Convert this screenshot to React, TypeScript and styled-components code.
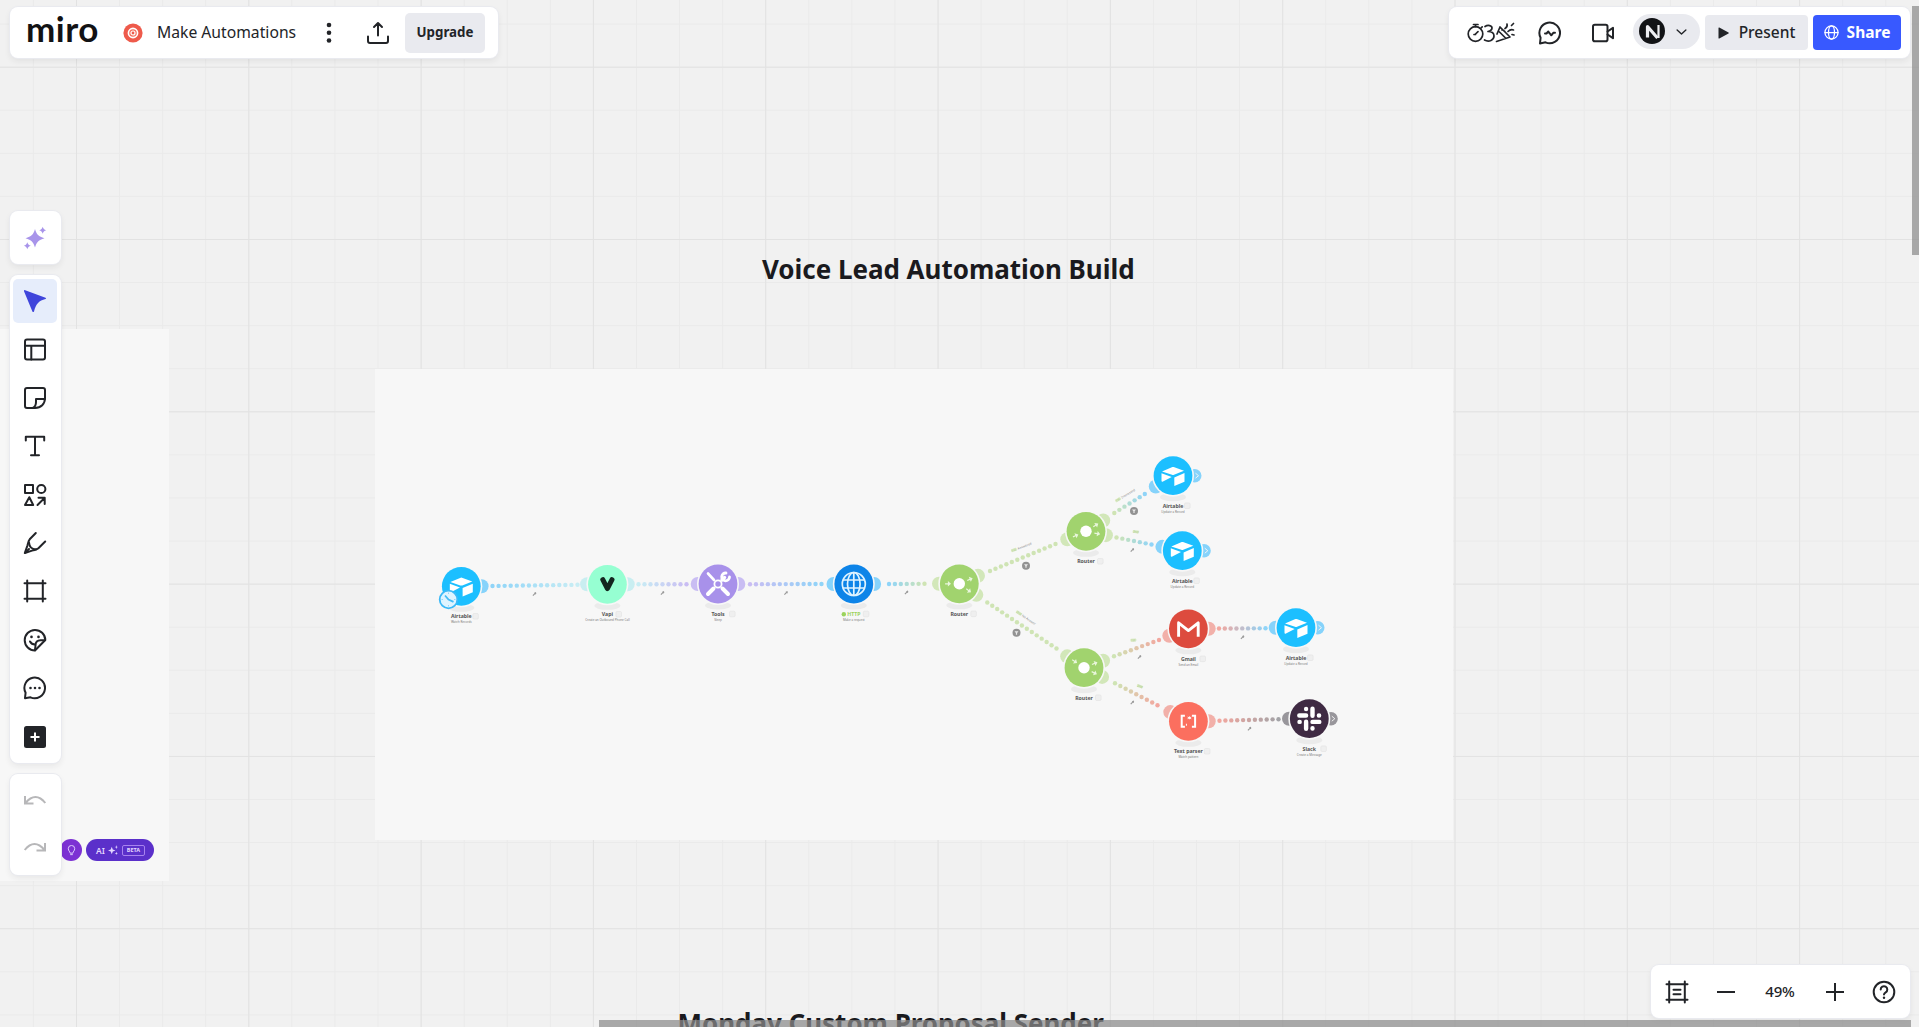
import React from 'react';
import styled, { createGlobalStyle } from 'styled-components';

const colors = {
  ink: '#222428',
  canvas: '#f1f1f1',
  frame: '#f7f7f7',
  muted: '#e9eaef',
  primary: '#3859ff',
  airtable: '#1cbfff',
  vapi: '#96ffd2',
  tools: '#a891ea',
  http: '#0d84e8',
  router: '#a1d36e',
  gmail: '#dd4b3e',
  parser: '#fb6f5f',
  slack: '#3f2a43',
};

const GlobalStyle = createGlobalStyle`
  * { box-sizing: border-box; }
  html, body, #root { height: 100%; margin: 0; }
  body {
    overflow: hidden;
    background: ${colors.canvas};
    color: ${colors.ink};
    font-family: 'Noto Sans', 'Open Sans', sans-serif;
  }
  button { font-family: inherit; color: inherit; border: 0; padding: 0; background: none; }
  svg { display: block; flex: none; }
`;

/* ---------- canvas ---------- */

const Board = styled.div`
  position: absolute;
  inset: 0;
  overflow: hidden;
  background-color: ${colors.canvas};
  background-image:
    linear-gradient(to right, #e2e2e2 1px, transparent 1px),
    linear-gradient(to bottom, #e2e2e2 1px, transparent 1px),
    linear-gradient(to right, #eaeaea 1px, transparent 1px),
    linear-gradient(to bottom, #eaeaea 1px, transparent 1px);
  background-size: 172.32px 172.32px, 172.32px 172.32px, 43.08px 43.08px, 43.08px 43.08px;
  background-position: 76px 66.7px, 76px 66.7px, 32.9px 23.6px, 32.9px 23.6px;
`;

const BoardTitle = styled.h2<{ $x: number; $y: number }>`
  position: absolute;
  left: ${(p) => p.$x}px;
  top: ${(p) => p.$y}px;
  margin: 0;
  font-size: 26px;
  line-height: 36px;
  font-weight: 700;
  letter-spacing: -0.03px;
  white-space: nowrap;
  color: #1a1a1e;
`;

const BoardImage = styled.div<{ $x: number; $y: number; $w: number; $h: number }>`
  position: absolute;
  left: ${(p) => p.$x}px;
  top: ${(p) => p.$y}px;
  width: ${(p) => p.$w}px;
  height: ${(p) => p.$h}px;
  background: ${colors.frame};
`;

const AiChips = styled.div`
  display: flex;
  align-items: center;
  justify-content: flex-end;
  gap: 4px;
  height: 22px;
  margin: 510px 15px 0 0;
  color: #e4d8ff;
`;

const BulbChip = styled.div`
  display: grid;
  place-items: center;
  width: 22px;
  height: 22px;
  border-radius: 50%;
  background: #7c31d3;
`;

const AiChip = styled.div`
  display: flex;
  align-items: center;
  gap: 3px;
  width: 68px;
  height: 22px;
  padding: 0 9px 0 10px;
  border-radius: 11px;
  background: #5b30ca;
  font-size: 8.5px;
  font-weight: 600;
`;

const BetaTag = styled.span`
  display: grid;
  place-items: center;
  width: 24px;
  height: 11px;
  margin-left: 1px;
  border: 1px solid #a883ee;
  border-radius: 2px;
  font-size: 5.5px;
  font-weight: 700;
`;

const Diagram = styled.svg`
  position: absolute;
  inset: 0;
`;

const NodeName = styled.text`
  font-size: 5.2px;
  font-weight: 700;
  fill: #555;
  text-anchor: middle;
`;

const NodeAction = styled.text`
  font-size: 3px;
  fill: #777;
  text-anchor: middle;
`;

const EdgeLabel = styled.text`
  font-size: 3.2px;
  fill: #888;
`;

type Kind = 'airtable' | 'vapi' | 'tools' | 'http' | 'router' | 'gmail' | 'parser' | 'slack';

interface FlowNode {
  x: number;
  y: number;
  kind: Kind;
  name: string;
  action?: string;
  ports: number[];
  out?: boolean;
  arrows?: number[];
}

const nodes: FlowNode[] = [
  { x: 461.3, y: 586.3, kind: 'airtable', name: 'Airtable', action: 'Watch Records', ports: [0] },
  { x: 607.4, y: 584.3, kind: 'vapi', name: 'Vapi', action: 'Create an Outbound Phone Call', ports: [180, 0] },
  { x: 718, y: 584, kind: 'tools', name: 'Tools', action: 'Sleep', ports: [180, 0] },
  { x: 853.8, y: 584, kind: 'http', name: 'HTTP', action: 'Make a request', ports: [180, 0] },
  { x: 959.3, y: 583.8, kind: 'router', name: 'Router', ports: [180, -23, 33], arrows: [180, -23, 36] },
  { x: 1086, y: 531.3, kind: 'router', name: 'Router', ports: [157, -32, 11], arrows: [157, -32, 12] },
  { x: 1173, y: 475.7, kind: 'airtable', name: 'Airtable', action: 'Update a Record', ports: [148], out: true },
  { x: 1182.3, y: 550.7, kind: 'airtable', name: 'Airtable', action: 'Update a Record', ports: [191], out: true },
  { x: 1084, y: 667.7, kind: 'router', name: 'Router', ports: [214, -20, 27], arrows: [214, -22, 27] },
  { x: 1188.4, y: 628.8, kind: 'gmail', name: 'Gmail', action: 'Send an Email', ports: [160, 0] },
  { x: 1296, y: 627.7, kind: 'airtable', name: 'Airtable', action: 'Update a Record', ports: [180], out: true },
  { x: 1188.4, y: 721.3, kind: 'parser', name: 'Text parser', action: 'Match pattern', ports: [207, 0] },
  { x: 1309.3, y: 718.7, kind: 'slack', name: 'Slack', action: 'Create a Message', ports: [180], out: true },
];

interface FlowEdge {
  from: [number, number];
  to: [number, number];
  count: number;
  colors: [string, string];
  tool?: [number, number];
  filter?: [number, number];
  label?: { x: number; y: number; angle: number; text: string; tag: string };
}

const light = {
  airtable: '#8fd4f8',
  aqua: '#c8edf4',
  tools: '#c9bdf3',
  router: '#cfe4b4',
  red: '#f2a79f',
  gray: '#a3a3a7',
};

const edges: FlowEdge[] = [
  { from: [492.5, 586], to: [577.5, 584.8], count: 15, colors: [light.airtable, light.aqua], tool: [534.5, 594] },
  { from: [638.5, 584.3], to: [686.5, 584.2], count: 9, colors: [light.aqua, light.tools], tool: [662.5, 593] },
  { from: [750, 584.2], to: [821.5, 584], count: 13, colors: [light.tools, light.airtable], tool: [786, 593] },
  { from: [889, 584], to: [924.5, 583.8], count: 7, colors: [light.airtable, light.router], tool: [906.5, 592.5] },
  {
    from: [990, 571], to: [1055.5, 544], count: 13, colors: [light.router, light.router], filter: [1026, 565.8],
    label: { x: 1012, y: 552, angle: -21, text: 'Answered', tag: '1st' },
  },
  {
    from: [987.3, 602.5], to: [1056.5, 648.5], count: 15, colors: [light.router, light.router], filter: [1016.5, 632.8],
    label: { x: 1016, y: 612.5, angle: 34, text: 'No Answer', tag: '2nd' },
  },
  {
    from: [1114.3, 513], to: [1144.8, 494], count: 7, colors: [light.router, light.airtable], filter: [1134, 511],
    label: { x: 1116.5, y: 502, angle: -31, text: 'Interested', tag: '1st' },
  },
  {
    from: [1116.5, 537.5], to: [1151.5, 544.5], count: 7, colors: [light.router, light.airtable], tool: [1132.3, 550],
    label: { x: 1133, y: 532.5, angle: 8, text: '', tag: '2nd' },
  },
  {
    from: [1114, 656.3], to: [1159, 640], count: 9, colors: [light.router, light.red], tool: [1139.5, 657],
    label: { x: 1131, y: 641.5, angle: -5, text: '', tag: '1st' },
  },
  {
    from: [1115, 683.3], to: [1157.5, 705.2], count: 9, colors: [light.router, light.red], tool: [1132.3, 702.5],
    label: { x: 1137, y: 686.5, angle: 20, text: '', tag: '2nd' },
  },
  { from: [1219, 628.5], to: [1265.5, 628.3], count: 9, colors: [light.red, light.airtable], tool: [1242.5, 637.3] },
  { from: [1219.5, 720.7], to: [1278.5, 719.2], count: 11, colors: [light.red, light.gray], tool: [1249.5, 728.7] },
];

const portColor: Record<Kind, string> = {
  airtable: '#86d3fb',
  vapi: '#c9eef1',
  tools: '#c9bdf3',
  http: '#86d3fb',
  router: '#d2e7b9',
  gmail: '#f2b0a9',
  parser: '#f2b0a9',
  slack: '#98969b',
};

const rad = (deg: number) => (deg * Math.PI) / 180;

const mix = (a: string, b: string, t: number) => {
  const channel = (hex: string, i: number) => parseInt(hex.slice(i, i + 2), 16);
  return `rgb(${[1, 3, 5].map((i) => Math.round(channel(a, i) * (1 - t) + channel(b, i) * t)).join(',')})`;
};

const Edge: React.FC<{ edge: FlowEdge }> = ({ edge }) => {
  const { from, to, count, label } = edge;
  return (
    <g>
      {Array.from({ length: count }, (_, i) => {
        const t = i / (count - 1);
        return (
          <circle
            key={i}
            cx={from[0] + (to[0] - from[0]) * t}
            cy={from[1] + (to[1] - from[1]) * t}
            r={2.2}
            fill={mix(edge.colors[0], edge.colors[1], t)}
          />
        );
      })}
      {edge.tool && (
        <path
          d={`M${edge.tool[0] - 1.6} ${edge.tool[1] + 1.6}l2.2-2.2m-.8-.2 1.8-.6m-.8 1.7 .5-1.3`}
          stroke="#9a9a9a"
          strokeWidth={1.2}
          fill="none"
        />
      )}
      {edge.filter && (
        <g transform={`translate(${edge.filter[0]} ${edge.filter[1]})`}>
          <circle r={4} fill="#929292" />
          <path d="M-2-1.5h4L.6.3v1.6h-1.2V.3z" fill="#e9e9e9" />
        </g>
      )}
      {label && (
        <g transform={`translate(${label.x} ${label.y}) rotate(${label.angle})`}>
          <rect x={-0.5} y={-2.7} width={6} height={3} rx={1} fill="#d9eac4" />
          <EdgeLabel style={{ fill: '#a9c884' }}>{label.tag}</EdgeLabel>
          {label.text && <EdgeLabel x={6.5}>{label.text}</EdgeLabel>}
        </g>
      )}
    </g>
  );
};

const Glyph: React.FC<{ kind: Kind; arrows?: number[] }> = ({ kind, arrows = [] }) => {
  switch (kind) {
    case 'airtable':
      return (
        <g fill="#fff">
          <path d="M-11-4.3-.6-8.6Q0-8.9.7-8.6L11-4.9 1-.9Q0-.5-1-.9z" />
          <path d="M-11.5-2.5-1.3 1.2-10 5.8Q-11.5 6.4-11.5 5z" />
          <path d="M1.3 1.8 11.5-2.6V6L1.3 10.2z" />
        </g>
      );
    case 'vapi':
      return <path d="M-4.6-4.6 0 4.3 4.6-4.6" fill="none" stroke="#14251f" strokeWidth={5} strokeLinecap="round" strokeLinejoin="round" />;
    case 'tools':
      return (
        <g stroke="#fff" fill="none" strokeLinecap="round">
          <path d="M-10-10.5-4-4" strokeWidth={2.6} />
          <path d="M4.5 4.5 10 10M-4.5 4.5-10 10" strokeWidth={4} />
          <path d="M4-4 6.5-6.5" strokeWidth={3.4} />
          <path d="M8-11A3.9 3.9 0 1 0 11.5-7" strokeWidth={2.8} />
          <circle r={3.6} strokeWidth={1.8} />
        </g>
      );
    case 'http':
      return (
        <g stroke="#dff3ff" fill="none" strokeWidth={1.7}>
          <circle r={11.5} />
          <ellipse rx={6.3} ry={11.5} />
          <path d="M0-11.5v23M-11-4H11M-11 4H11" />
        </g>
      );
    case 'router':
      return (
        <g>
          <circle r={5.7} fill="#fff" />
          {arrows.map((a, i) => {
            const inward = i === 0;
            return (
              <path
                key={a}
                transform={`translate(${11.4 * Math.cos(rad(a))} ${11.4 * Math.sin(rad(a))}) rotate(${inward ? a + 180 : a})`}
                d="M-2.8-.6H0V-2.7L3.1 0 0 2.7V.6h-2.8z"
                fill="#e9f6dc"
              />
            );
          })}
        </g>
      );
    case 'gmail':
      return <path d="M-9.8 8V-6L0 1.8 9.8-6V8" fill="none" stroke="#fff" strokeWidth={2.9} strokeLinejoin="round" />;
    case 'parser':
      return (
        <g stroke="#fff" fill="none" strokeWidth={2}>
          <path d="M-3.5-5.5H-6.7V5.5H-3.5M3.5-5.5H6.7V5.5H3.5" />
          <path d="M1-5v3M-.8-4.2l3.6 1.6M-.8-2.6l3.6-1.6" strokeWidth={0.9} />
          <path d="M-2.5 3.5h1" />
        </g>
      );
    case 'slack':
      return (
        <g stroke="#fff" strokeWidth={4.4} strokeLinecap="round">
          <path d="M3.2-10V-3M-3.2 3V10M-10-3.2H-3.2M3.2 3.2H10M-3.2-9.8v.2M3.2 9.8v-.2M9.8-3.2h-.2M-9.8 3.2h.2" />
        </g>
      );
    default:
      return null;
  }
};

const Module: React.FC<{ node: FlowNode }> = ({ node }) => {
  const { kind, ports, out } = node;
  const isHttp = kind === 'http';
  const badgeX = node.name.length > 9 ? 16 : isHttp ? 9.5 : node.name === 'Vapi' ? 8.5 : 11.5;
  return (
    <g transform={`translate(${node.x} ${node.y})`}>
      <ellipse cy={21.5} rx={13} ry={4} fill="#ebebeb" />
      {ports.map((a) => (
        <circle key={a} cx={20.3 * Math.cos(rad(a))} cy={20.3 * Math.sin(rad(a))} r={7} fill={portColor[kind]} />
      ))}
      {out && (
        <g>
          <circle cx={21.7} r={6.8} fill={portColor[kind]} />
          <path d="M22.5-2.5 25.5 0l-3 2.5" stroke="#f7f7f7" strokeWidth={0.9} fill="none" />
        </g>
      )}
      <circle r={21} fill={colors.frame} />
      <circle r={19.4} fill={colors[kind]} />
      <Glyph kind={kind} arrows={node.arrows} />
      {isHttp && <circle cx={-10} cy={30.2} r={2.2} fill="#9bd35c" />}
      <NodeName x={isHttp ? 0 : 0} y={32} style={isHttp ? { fill: '#9bd35c' } : undefined}>
        {node.name}
      </NodeName>
      <rect x={badgeX} y={27.2} width={5.6} height={5.6} rx={1.2} fill="#efefef" stroke="#dedede" strokeWidth={0.5} />
      {node.action && <NodeAction y={37}>{node.action}</NodeAction>}
    </g>
  );
};

const Workflow: React.FC = () => (
  <Diagram width={1919} height={1027} viewBox="0 0 1919 1027">
    {edges.map((edge, i) => (
      <Edge key={i} edge={edge} />
    ))}
    {nodes.map((node, i) => (
      <Module key={i} node={node} />
    ))}
    <g transform="translate(448.5 599.5)">
      <circle r={8.8} fill="#dff4ff" stroke="#3cb9f7" strokeWidth={1.8} />
      <path d="M-3.5-4 0 0 5 2.4" stroke="#45bcf6" strokeWidth={1.8} fill="none" />
      <path d="M0-7v1.5M0 5.5V7M-7 0h1.5M5.5 0H7" stroke="#8cd3f8" strokeWidth={0.9} />
    </g>
  </Diagram>
);

/* ---------- interface ---------- */

const Interface = styled.div`
  position: relative;
  display: flex;
  flex-direction: column;
  height: 100vh;
  padding: 7px 9px 9px 10px;
`;

const Panel = styled.div`
  display: flex;
  align-items: center;
  background: #fff;
  border-radius: 8px;
  box-shadow: 0 0 0 1px #e9eaef, 0 3px 6px rgba(34, 36, 40, 0.08);
`;

const TopRow = styled.header`
  display: flex;
  justify-content: space-between;
  height: 51px;
`;

const BoardPanel = styled(Panel)`
  width: 488px;
  padding: 0 13px 0 16px;
`;

const Logo = styled.div`
  width: 97px;
  font-family: Lato, 'Noto Sans', sans-serif;
  font-size: 35px;
  line-height: 40px;
  font-weight: 700;
  letter-spacing: 0.5px;
  color: #121214;
  margin-top: -9px;
`;

const BoardName = styled.div`
  width: 162px;
  margin: -2px 0 0 14px;
  font-size: 15.7px;
  white-space: nowrap;
`;

const UpgradeButton = styled.button`
  width: 80px;
  height: 40px;
  margin-left: auto;
  padding-bottom: 2px;
  border-radius: 5px;
  background: ${colors.muted};
  font-size: 13.3px;
  font-weight: 700;
`;

const SharePanel = styled(Panel)`
  width: 461px;
  padding: 0 9px 0 18px;
`;

const AccountButton = styled.button`
  display: flex;
  align-items: center;
  gap: 9px;
  width: 67px;
  height: 35px;
  margin: -3px 5px 0 18px;
  padding-left: 6px;
  border-radius: 18px;
  background: ${colors.muted};
`;

const ActionButton = styled.button<{ $primary?: boolean }>`
  display: flex;
  align-items: center;
  justify-content: center;
  gap: ${(p) => (p.$primary ? 8 : 10)}px;
  width: ${(p) => (p.$primary ? 88 : 103)}px;
  height: 35px;
  margin-right: ${(p) => (p.$primary ? 0 : 5)}px;
  border-radius: 4px;
  background: ${(p) => (p.$primary ? colors.primary : colors.muted)};
  color: ${(p) => (p.$primary ? '#fff' : colors.ink)};
  font-size: 15.5px;
  font-weight: ${(p) => (p.$primary ? 700 : 500)};
`;

const ActionLabel = styled.span`
  padding-bottom: 2px;
`;

const SideColumn = styled.nav`
  display: flex;
  flex-direction: column;
  gap: 11px;
  width: 51px;
  margin-top: 153px;
`;

const SidePanel = styled(Panel)<{ $height: number; $top?: number }>`
  flex-direction: column;
  align-items: flex-start;
  height: ${(p) => p.$height}px;
  padding: ${(p) => p.$top || 0}px 0 0 3px;
`;

const ToolButton = styled.button<{ $active?: boolean }>`
  display: grid;
  place-items: center;
  width: 44px;
  height: 44px;
  margin-bottom: 4.5px;
  border-radius: 5px;
  background: ${(p) => (p.$active ? '#e6edfb' : 'transparent')};
`;

const ZoomPanel = styled(Panel)`
  width: 259px;
  height: 53px;
  margin: auto 0 0 auto;
  padding: 0 14px;
  justify-content: space-between;
`;

const ZoomValue = styled.span`
  width: 34px;
  margin: -2px 1px 0 0;
  text-align: center;
  font-size: 15px;
  font-weight: 500;
  letter-spacing: -0.2px;
`;

const ScrollTrack = styled.div<{ $vertical?: boolean }>`
  position: absolute;
  background: rgba(140, 140, 140, 0.72);
  ${(p) =>
    p.$vertical
      ? 'right: 0; top: 6px; width: 7px; height: 249px;'
      : 'bottom: 0; left: 599px; right: 8px; height: 7px;'}
`;

const IconSlot = styled.div<{ $gap: number }>`
  margin-left: ${(p) => p.$gap}px;
`;

const Icon: React.FC<{ size?: number; width?: number; stroke?: string; children: React.ReactNode }> = ({
  size = 24,
  width = 2,
  stroke = 'currentColor',
  children,
}) => (
  <svg width={size} height={size} viewBox="0 0 24 24" fill="none" stroke={stroke} strokeWidth={width} strokeLinejoin="round" strokeLinecap="round">
    {children}
  </svg>
);

const tools: React.ReactNode[] = [
  <Icon key="templates">
    <rect x={2} y={2.5} width={20} height={20} rx={2} />
    <path d="M2 8.8h20M8.3 8.8V22.5" />
  </Icon>,
  <Icon key="sticky">
    <path d="M4 2h16a2 2 0 0 1 2 2v8c0 6-4 10-10 10H4a2 2 0 0 1-2-2V4a2 2 0 0 1 2-2z" />
    <path d="M21.8 13H13v3c0 3-1 5-3.2 6" />
  </Icon>,
  <Icon key="text">
    <path d="M2.8 6.5V2.8h18.4v3.7M12 2.8v18.4M8 21.2h8" />
  </Icon>,
  <Icon key="shapes">
    <path d="M2 2h8v8H2zM6.3 14.2 10.2 22H2zM14.5 22l7-7M15.5 14.8h6.2v6.2" />
    <circle cx={18.3} cy={6} r={4.1} />
  </Icon>,
  <Icon key="pen">
    <path d="M12.8 2 6.7 8.3C5.2 10 5.2 12 4.5 14.3L1.8 22l8-2.6c2.2-.7 4-.7 5.6-2.2l6.8-6.7" />
    <path d="M6 11.5c.3 4.2 2.7 6.8 7 6.9M2.5 21.5 6 18" />
  </Icon>,
  <Icon key="frame">
    <path d="M4.2 1.5v21M19.8 1.5v21M1.5 4.2h21M1.5 19.8h21" />
  </Icon>,
  <Icon key="sticker">
    <path d="M12 22.5A10.3 10.3 0 1 1 22.3 12z" />
    <path d="M12 22.2c0-2 .5-3.2.5-5 0-3.2 1.8-5 5-5h4.5" />
    <path d="M7 13.5c1 2 2.7 3 5 3" />
    <path d="M8.5 8.8v.2M15.5 8.8v.2" strokeWidth={2.6} />
  </Icon>,
  <Icon key="comment">
    <path d="M2 22.2l.6-5.5A10.3 10.3 0 1 1 7.5 21.3z" />
    <path d="M7.5 12h.01M12 12h.01M16.5 12h.01" strokeWidth={2.6} />
  </Icon>,
  <Icon key="more">
    <rect x={1} y={1} width={22} height={22} rx={2.5} fill={colors.ink} stroke="none" />
    <path d="M12 7.5v9M7.5 12h9" stroke="#fff" strokeLinecap="butt" />
  </Icon>,
];

const App: React.FC = () => {
  return (
    <>
      <GlobalStyle />
      <Board>
        <BoardImage $x={0} $y={329} $w={169} $h={552}>
          <AiChips>
            <BulbChip>
              <Icon size={11}>
                <path d="M9 17c0-3-4-4-4-9a7 7 0 0 1 14 0c0 5-4 6-4 9zM10 21h4" />
              </Icon>
            </BulbChip>
            <AiChip>
              AI
              <svg width={10} height={10} viewBox="0 0 24 24" fill="currentColor">
                <path d="M9 4l2.5 6.5L18 13l-6.5 2.5L9 22l-2.5-6.5L0 13l6.5-2.5zM20 0l1 4 3 1-3 1-1 4-1-4-3-1 3-1zM20 16l1 3 3 1-3 1-1 3-1-3-3-1 3-1z" />
              </svg>
              <BetaTag>BETA</BetaTag>
            </AiChip>
          </AiChips>
        </BoardImage>
        <BoardImage $x={375} $y={369} $w={1078} $h={471} />
        <BoardTitle $x={762} $y={251}>Voice Lead Automation Build</BoardTitle>
        <BoardTitle $x={677.5} $y={1005}>Monday Custom Proposal Sender</BoardTitle>
        <Workflow />
      </Board>

      <Interface>
        <TopRow>
          <BoardPanel>
            <Logo>miro</Logo>
            <svg width={20} height={20} viewBox="0 0 20 20">
              <circle cx={10} cy={10} r={9.6} fill="#ee5a4b" />
              <circle cx={10} cy={10} r={4.6} fill="#f4705f" stroke="#fff" strokeWidth={1.6} />
              <circle cx={10} cy={10} r={2} fill="#ee5a4b" stroke="#fff" strokeWidth={1.2} />
            </svg>
            <BoardName>Make Automations</BoardName>
            <svg width={20} height={24} viewBox="0 0 20 24" fill={colors.ink}>
              <circle cx={10} cy={4} r={2.3} />
              <circle cx={10} cy={11.7} r={2.3} />
              <circle cx={10} cy={19.5} r={2.3} />
            </svg>
            <IconSlot $gap={27}>
              <Icon>
                <path d="M12 14.5V2.2M8 6l4-4 4 4M2 15.5V20a2 2 0 0 0 2 2h16a2 2 0 0 0 2-2v-4.5" />
              </Icon>
            </IconSlot>
            <UpgradeButton>Upgrade</UpgradeButton>
          </BoardPanel>

          <SharePanel>
            <svg width={49} height={24} viewBox="0 0 49 24" fill="none" stroke={colors.ink} strokeWidth={1.7} strokeLinecap="round" strokeLinejoin="round">
              <circle cx={8.5} cy={13} r={7.3} />
              <path d="M8.5 5.7V4M6.5 3.5h4.5M14 7l1.2-1.2M8 13.5l3-2.8M7 13.5h1.5" />
              <path d="M18 5.500c3-2 7-1 7 1.500 0 2-2 3-4 3.500 3 0 6 1.200 6 4.500 0 4-5 6.500-9.500 4" />
              <path d="M33 6 43 16 29.5 20.5M33 6l-3 7M32.5 11l6 6M35 9c1 0 2 .5 3 1.500M38 7.500c2-1 2.500-2.500 2-4.500M41 10.500c2-2 4-2 5.500-1.500M44.500 4.500l2-2M45 13.500l2 .5" />
            </svg>
            <IconSlot $gap={22}>
              <Icon>
                <path d="M2 22.5l.6-5.8A10.3 10.3 0 1 1 7.5 21.3z" />
                <path d="M7 12.5h1.5l1.8-2 3 3.8 2-2.5H17" />
              </Icon>
            </IconSlot>
            <IconSlot $gap={29}>
              <Icon>
                <rect x={2} y={3.8} width={14.5} height={16.4} rx={1.8} />
                <path d="M16.5 10.5 22 6.8v10.4l-5.5-3.7" />
              </Icon>
            </IconSlot>
            <AccountButton>
              <svg width={26} height={26} viewBox="0 0 26 26">
                <circle cx={13} cy={13} r={13} fill="#121316" />
                <path d="M8.5 19.5V8.5L18.5 20" stroke="#eeeef2" strokeWidth={3.2} fill="none" strokeLinejoin="round" />
                <path d="M19.5 20V7" stroke="#eeeef2" strokeWidth={2.2} />
              </svg>
              <Icon size={15} width={2.2}>
                <path d="m5 9.5 7 6.5 7-6.5" />
              </Icon>
            </AccountButton>
            <ActionButton>
              <svg width={11} height={12} viewBox="0 0 11 12">
                <path d="M.5 1Q.5.2 1.3.5L10.500 5.500q.6.500 0 1L1.300 11.500q-.8.300-.8-.5z" fill={colors.ink} />
              </svg>
              <ActionLabel>Present</ActionLabel>
            </ActionButton>
            <ActionButton $primary>
              <Icon size={15}>
                <circle cx={12} cy={12} r={10.5} />
                <ellipse cx={12} cy={12} rx={4.8} ry={10.5} />
                <path d="M1.5 12h21" />
              </Icon>
              <ActionLabel>Share</ActionLabel>
            </ActionButton>
          </SharePanel>
        </TopRow>

        <SideColumn>
          <SidePanel $height={53} $top={5}>
            <ToolButton>
              <svg width={24} height={24} viewBox="0 0 24 24" fill="#a894ea">
                <path d="M12 3c1.6 5.500 3.500 7.500 9.500 9.200-6 1.900-7.900 3.800-9.500 9.300-1.600-5.500-3.500-7.400-9.500-9.300C8.500 10.500 10.400 8.500 12 3z" />
                <path d="M19.700.8c.6 2.100 1.400 2.900 3.500 3.500-2.100.6-2.900 1.400-3.500 3.500-.6-2.100-1.400-2.900-3.500-3.500 2.100-.6 2.900-1.400 3.500-3.500zM4.300 16.200c.6 2.100 1.400 2.900 3.500 3.500-2.100.6-2.900 1.400-3.500 3.500-.6-2.100-1.400-2.900-3.500-3.500 2.100-.6 2.900-1.400 3.500-3.500z" />
              </svg>
            </ToolButton>
          </SidePanel>
          <SidePanel $height={488} $top={4}>
            <ToolButton $active>
              <svg width={24} height={24} viewBox="0 0 24 24" fill="#3f45db">
                <path d="M1 2.2Q.8.8 2.2 1.2L22.5 8.7q1.300.8 0 1.400C16 11.500 13 15 11 22.500q-.8 1.200-1.600 0z" />
              </svg>
            </ToolButton>
            {tools.map((icon, i) => (
              <ToolButton key={i}>{icon}</ToolButton>
            ))}
          </SidePanel>
          <SidePanel $height={101} $top={9}>
            <ToolButton>
              <Icon stroke="#b7b7b9">
                <path d="M2 4v7.5h8.500M2.500 11C9 3 16 3 22.300 11" strokeLinecap="butt" strokeLinejoin="miter" />
              </Icon>
            </ToolButton>
            <ToolButton>
              <Icon stroke="#b7b7b9">
                <path d="M22 5v7.5h-8.500M21.500 12C15 4 8 4 1.700 12" strokeLinecap="butt" strokeLinejoin="miter" />
              </Icon>
            </ToolButton>
          </SidePanel>
        </SideColumn>

        <ZoomPanel>
          <Icon>
            <path d="M4.2 1.5v21M19.8 1.5v21M1.5 4.2h21M1.5 19.8h21M8.5 9.8h7M8.5 14.2h7" />
          </Icon>
          <Icon>
            <path d="M3 12h18" strokeLinecap="butt" />
          </Icon>
          <ZoomValue>49%</ZoomValue>
          <Icon>
            <path d="M12 3v18M3 12h18" strokeLinecap="butt" />
          </Icon>
          <Icon>
            <circle cx={12} cy={12} r={10.3} />
            <path d="M8.7 9.5a3.3 3.3 0 1 1 5 2.8c-1.1.7-1.7 1.2-1.7 2.3" />
            <path d="M12 17.6v.1" strokeWidth={2.4} />
          </Icon>
        </ZoomPanel>
        <ScrollTrack $vertical />
        <ScrollTrack />
      </Interface>
    </>
  );
};

export default App;
